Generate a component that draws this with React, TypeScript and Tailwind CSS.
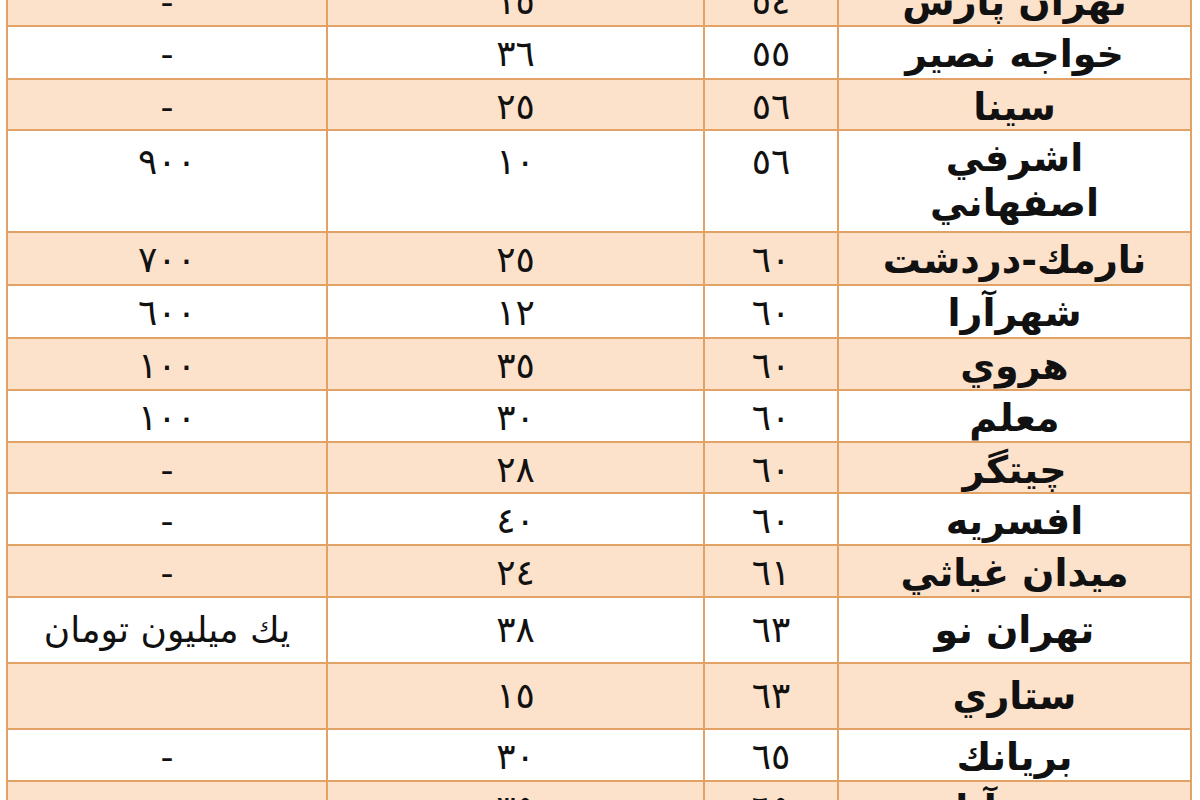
// App.tsx
const rows = [
  { name: 'تهران پارس', age: '٥٤', area: '١٥', price: '-', h: 'h-[52px]', tinted: true },
  { name: 'خواجه نصير', age: '٥٥', area: '٣٦', price: '-', h: 'h-[53px]', tinted: false },
  { name: 'سينا', age: '٥٦', area: '٢٥', price: '-', h: 'h-[51px]', tinted: true },
  { name: 'اشرفي\nاصفهاني', age: '٥٦', area: '١٠', price: '٩٠٠', h: 'h-[102px]', tinted: false, tall: true },
  { name: 'نارمك-دردشت', age: '٦٠', area: '٢٥', price: '٧٠٠', h: 'h-[53px]', tinted: true },
  { name: 'شهرآرا', age: '٦٠', area: '١٢', price: '٦٠٠', h: 'h-[53px]', tinted: false },
  { name: 'هروي', age: '٦٠', area: '٣٥', price: '١٠٠', h: 'h-[52px]', tinted: true },
  { name: 'معلم', age: '٦٠', area: '٣٠', price: '١٠٠', h: 'h-[52px]', tinted: false },
  { name: 'چيتگر', age: '٦٠', area: '٢٨', price: '-', h: 'h-[51px]', tinted: true },
  { name: 'افسريه', age: '٦٠', area: '٤٠', price: '-', h: 'h-[52px]', tinted: false },
  { name: 'ميدان غياثي', age: '٦١', area: '٢٤', price: '-', h: 'h-[52px]', tinted: true },
  { name: 'تهران نو', age: '٦٣', area: '٣٨', price: 'يك ميليون تومان', h: 'h-[66px]', tinted: false },
  { name: 'ستاري', age: '٦٣', area: '١٥', price: '', h: 'h-[66px]', tinted: true },
  { name: 'بريانك', age: '٦٥', area: '٣٠', price: '-', h: 'h-[52px]', tinted: false },
  { name: 'جنت آباد', age: '٦٥', area: '٣٥', price: '', h: 'h-[52px]', tinted: true },
];

export default function App() {
  return (
    <div className="w-[1200px] h-[800px] overflow-hidden bg-white text-[#111] font-['DejaVu_Sans',sans-serif]">
      <div className="-mt-[25px] ml-[6px] w-[1186px] border-x-2 border-[#e3a265]">
        {rows.map((r, i) => (
          <div
            key={i}
            className={`grid grid-cols-[318px_377px_134px_353px] border-b-2 border-[#e3a265] ${r.h} ${r.tinted ? 'bg-[#fde2cb]' : 'bg-white'}`}
          >
            {/* قیمت */}
            <div className={`flex justify-center ${r.tall ? 'items-start pt-[4px]' : 'items-center'} ${r.price.length > 4 ? 'text-[36px]' : 'text-[36px]'}`} dir="rtl">
              {r.price}
            </div>
            {/* متراژ */}
            <div className={`flex justify-center border-l-2 border-[#e3a265] text-[36px] ${r.tall ? 'items-start pt-[4px]' : 'items-center'}`}>
              {r.area}
            </div>
            {/* سن */}
            <div className={`flex justify-center border-l-2 border-[#e3a265] text-[36px] ${r.tall ? 'items-start pt-[4px]' : 'items-center'}`}>
              {r.age}
            </div>
            {/* محله */}
            <div className="flex items-center justify-center border-l-2 border-[#e3a265] text-[38px] font-bold leading-[45px] text-center whitespace-pre-line" dir="rtl">
              {r.name}
            </div>
          </div>
        ))}
      </div>
    </div>
  );
}
